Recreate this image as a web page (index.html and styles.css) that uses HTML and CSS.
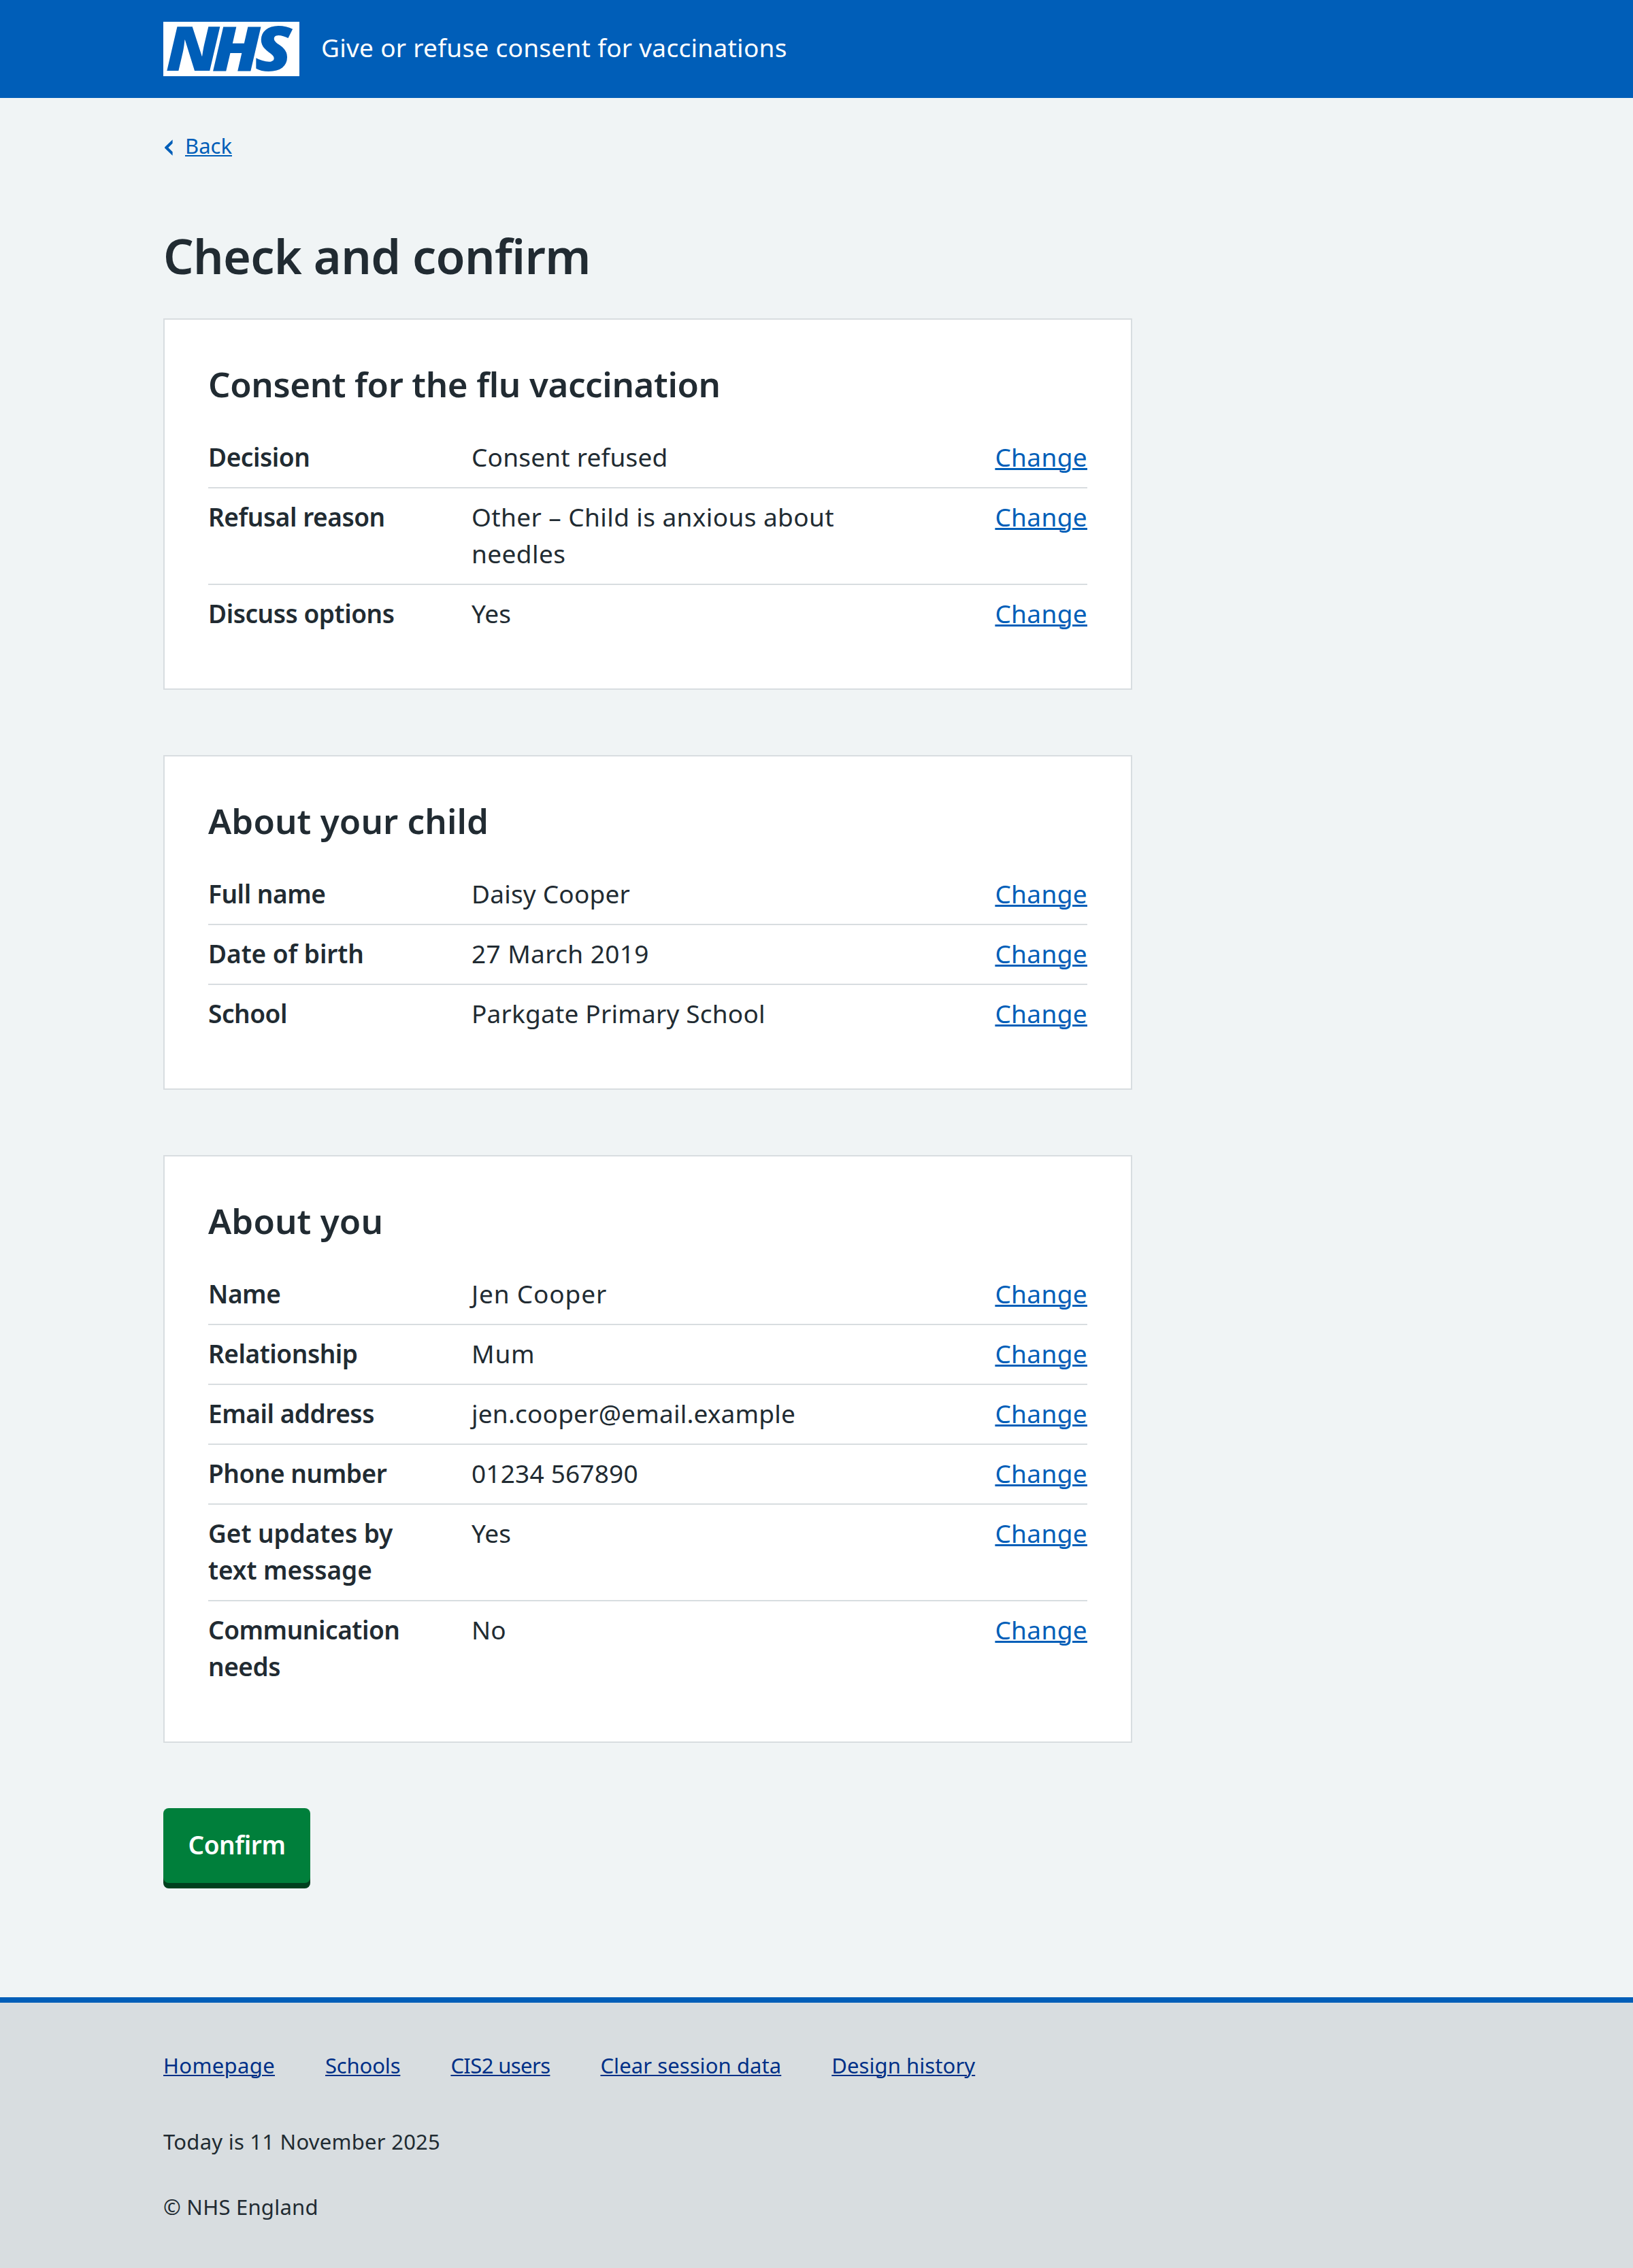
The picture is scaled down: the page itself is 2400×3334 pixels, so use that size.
FILE: index.html
```
<!DOCTYPE html>
<html lang="en">
<head>
<meta charset="utf-8">
<title>Check and confirm – Give or refuse consent for vaccinations</title>
<link rel="stylesheet" href="styles.css">
</head>
<body>
<header class="header">
  <div class="container header__inner">
    <svg class="header__logo" width="200" height="80" viewBox="0 0 200 80" role="img" aria-label="NHS">
      <rect width="200" height="80" fill="#fff"/>
      <text class="header__logo-text" x="3.3 65.1 122" y="72.3" transform="scale(1.1 1)">NHS</text>
    </svg>
    <span class="header__service">Give or refuse consent for vaccinations</span>
  </div>
</header>

<main class="container main">
  <a class="back" href="#">
    <svg class="back__icon" width="14" height="26" viewBox="0 0 14 26" aria-hidden="true">
      <path d="M13.6 1.2 2.4 11.9Q1.5 13 2.4 14.1L13.6 24.8V19.2L7.3 13 13.6 6.8Z" fill="currentColor"/>
    </svg>
    <span class="back__text">Back</span>
  </a>

  <h1 class="title">Check and confirm</h1>

  <section class="card">
    <h2 class="card__heading">Consent for the flu vaccination</h2>
    <dl class="summary">
      <div class="row"><dt class="key">Decision</dt><dd class="value">Consent refused</dd><dd class="action"><a class="link" href="#">Change</a></dd></div>
      <div class="row"><dt class="key">Refusal reason</dt><dd class="value value--loose">Other – Child is anxious about needles</dd><dd class="action"><a class="link" href="#">Change</a></dd></div>
      <div class="row"><dt class="key">Discuss options</dt><dd class="value">Yes</dd><dd class="action"><a class="link" href="#">Change</a></dd></div>
    </dl>
  </section>

  <section class="card">
    <h2 class="card__heading card__heading--wide">About your child</h2>
    <dl class="summary">
      <div class="row"><dt class="key">Full name</dt><dd class="value">Daisy Cooper</dd><dd class="action"><a class="link" href="#">Change</a></dd></div>
      <div class="row"><dt class="key key--wide">Date of birth</dt><dd class="value value--loose">27 March 2019</dd><dd class="action"><a class="link" href="#">Change</a></dd></div>
      <div class="row"><dt class="key">School</dt><dd class="value">Parkgate Primary School</dd><dd class="action"><a class="link" href="#">Change</a></dd></div>
    </dl>
  </section>

  <section class="card">
    <h2 class="card__heading card__heading--wide">About you</h2>
    <dl class="summary">
      <div class="row"><dt class="key">Name</dt><dd class="value value--wide">Jen Cooper</dd><dd class="action"><a class="link" href="#">Change</a></dd></div>
      <div class="row"><dt class="key">Relationship</dt><dd class="value value--wide">Mum</dd><dd class="action"><a class="link" href="#">Change</a></dd></div>
      <div class="row"><dt class="key">Email address</dt><dd class="value">jen.cooper@email.example</dd><dd class="action"><a class="link" href="#">Change</a></dd></div>
      <div class="row"><dt class="key">Phone number</dt><dd class="value">01234 567890</dd><dd class="action"><a class="link" href="#">Change</a></dd></div>
      <div class="row"><dt class="key key--wide">Get updates by text message</dt><dd class="value">Yes</dd><dd class="action"><a class="link" href="#">Change</a></dd></div>
      <div class="row"><dt class="key">Communication needs</dt><dd class="value">No</dd><dd class="action"><a class="link" href="#">Change</a></dd></div>
    </dl>
  </section>

  <button class="button" type="submit">Confirm</button>
</main>

<footer class="footer">
  <div class="container">
    <nav class="footer__links">
      <a class="footer__link footer__link--wide" href="#">Homepage</a>
      <a class="footer__link footer__link--narrow" href="#">Schools</a>
      <a class="footer__link footer__link--tight" href="#">CIS2 users</a>
      <a class="footer__link" href="#">Clear session data</a>
      <a class="footer__link" href="#">Design history</a>
    </nav>
    <p class="footer__text">Today is 11 November 2025</p>
    <p class="footer__text">© NHS England</p>
  </div>
</footer>
</body>
</html>
```
FILE: styles.css
```
* { box-sizing: border-box; }

body {
  margin: 0;
  background: #f0f4f5;
  color: #212b32;
  font: 400 37px/54px "Noto Sans", "Open Sans", sans-serif;
}

h1, h2, dl, dd, p { margin: 0; }

.container { width: 1920px; margin: 0 auto; }

/* Header */
.header { background: #005eb8; color: #fff; }
.header__inner {
  display: flex;
  align-items: center;
  gap: 32px;
  height: 144px;
}
.header__logo { display: block; overflow: visible; }
.header__logo-text {
  fill: #005eb8;
  font: italic 900 91px "Noto Sans", "Open Sans", sans-serif;
}
.header__service { letter-spacing: 0.28px; margin-top: -5px; }

/* Main */
.main { padding: 46px 0 160px; }

.back {
  display: flex;
  align-items: center;
  gap: 18px;
  width: max-content;
  height: 48px;
  color: #005eb8;
  font-size: 31px;
  line-height: 48px;
  text-decoration: none;
}
.back__icon { margin-top: 5px; }
.back__text {
  text-decoration: underline 2px;
  text-underline-offset: 2px;
}

.title {
  margin: 90px 0 44px;
  font-size: 70px;
  font-weight: 600;
  line-height: 96px;
  letter-spacing: -0.65px;
}

/* Cards */
.card {
  width: 1424px;
  margin-bottom: 96px;
  padding: 62px 64px 64px;
  border: 2px solid #d8dde0;
  background: #fff;
}
.card__heading {
  margin-bottom: 34px;
  font-size: 51px;
  font-weight: 600;
  line-height: 64px;
  letter-spacing: -0.37px;
}
.card__heading--wide { letter-spacing: 0.1px; }

.row {
  display: grid;
  grid-template-columns: 387px 585px 1fr;
  padding: 15px 0 17px;
  border-bottom: 2px solid #d8dde0;
}
.row:last-child { border-bottom-color: transparent; }
.key {
  padding-right: 48px;
  font-weight: 600;
  letter-spacing: -0.45px;
}
.key--wide { letter-spacing: -0.05px; }
.value { letter-spacing: 0.2px; }
.value--loose { letter-spacing: 0.4px; }
.value--wide { letter-spacing: 0.85px; }
.action { text-align: right; }

.link {
  color: #005eb8;
  letter-spacing: 0.35px;
  text-decoration: underline 3px;
  text-underline-offset: 2px;
}

/* Button */
.button {
  display: block;
  width: 216px;
  height: 110px;
  margin-bottom: 8px;
  padding: 0 0 2px;
  border: 0;
  border-radius: 8px;
  background: #007f3b;
  box-shadow: 0 8px 0 #00401e;
  color: #fff;
  font: 600 37px/54px "Noto Sans", "Open Sans", sans-serif;
  letter-spacing: -0.4px;
}

/* Footer */
.footer {
  height: 398px;
  padding-top: 68px;
  border-top: 8px solid #005eb8;
  background: #d8dde0;
  font-size: 31px;
  line-height: 48px;
}
.footer__links { display: flex; gap: 74px; margin-bottom: 64px; }
.footer__link {
  color: #003087;
  letter-spacing: 0.08px;
  text-decoration: underline 2px;
  text-underline-offset: 2px;
}
.footer__link--wide { letter-spacing: 0.35px; }
.footer__link--narrow { letter-spacing: -0.15px; }
.footer__link--tight { letter-spacing: -0.6px; }
.footer__text { margin-bottom: 48px; letter-spacing: 0.25px; }
```
